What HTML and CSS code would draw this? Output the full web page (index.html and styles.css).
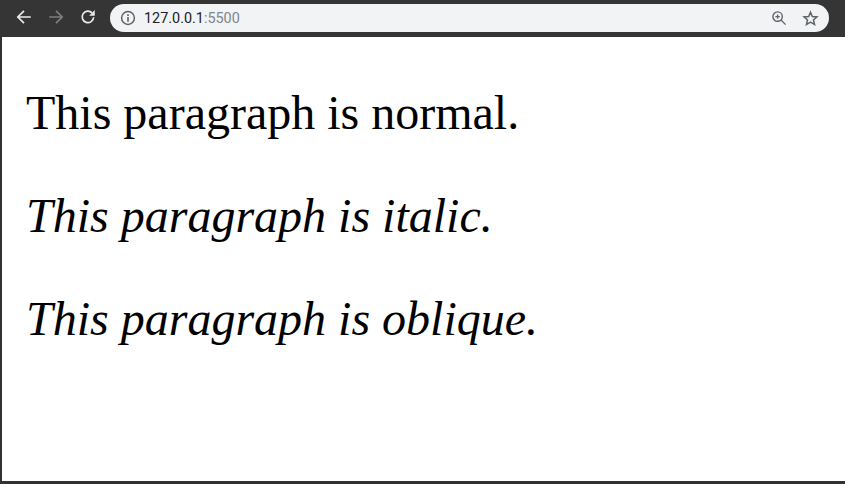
FILE: index.html
```html
<!DOCTYPE html>
<html lang="en">
<head>
    <meta charset="UTF-8">
    <meta name="viewport" content="width=device-width, initial-scale=1.0">
    <title>Font style</title>
    <link rel="stylesheet" href="styles.css">
</head>
<body>
    <div class="window">
        <div class="toolbar">
            <svg class="nav-icon" viewBox="0 0 16 16" aria-hidden="true"><path d="M14 8H3M8 2.5 2.5 8 8 13.5" fill="none" stroke="#e8eaed" stroke-width="1.5"/></svg>
            <svg class="nav-icon" viewBox="0 0 16 16" aria-hidden="true"><path d="M2 8h11M8 2.5 13.5 8 8 13.5" fill="none" stroke="#7c7e81" stroke-width="1.5"/></svg>
            <svg class="nav-icon" viewBox="0 0 16 16" aria-hidden="true"><path d="M13 8.2A5.1 5.1 0 1 1 11.6 4.4" fill="none" stroke="#e8eaed" stroke-width="1.5"/><path d="M14 1.8V6.8H9z" fill="#e8eaed"/></svg>
            <div class="address-bar">
                <svg class="info-icon" viewBox="0 0 14 14" aria-hidden="true"><circle cx="7" cy="7" r="5.6" fill="none" stroke="#5f6368" stroke-width="1.3"/><path d="M6.3 6.2h1.4v4H6.3zM6.3 3.8h1.4v1.4H6.3z" fill="#5f6368"/></svg>
                <span class="url">127.0.0.1<span class="url-port">:5500</span></span>
                <svg class="zoom-icon" viewBox="0 0 16 16" aria-hidden="true"><circle cx="6.6" cy="6.6" r="4.7" fill="none" stroke="#5f6368" stroke-width="1.4"/><path d="M10 10l4.6 4.6M4.4 6.6h4.4M6.6 4.4v4.4" fill="none" stroke="#5f6368" stroke-width="1.3"/></svg>
                <svg class="star-icon" viewBox="0 0 16 16" aria-hidden="true"><path d="M8 2.1l1.7 4 4.4.4-3.3 2.9 1 4.3L8 11.4l-3.8 2.3 1-4.3-3.3-2.9 4.4-.4z" fill="none" stroke="#5f6368" stroke-width="1.4"/></svg>
            </div>
        </div>
        <main class="page">
            <p>This paragraph is normal.</p>
            <p class="italic">This paragraph is italic.</p>
            <p class="oblique">This paragraph is oblique.</p>
        </main>
    </div>
</body>
</html>
```

FILE: styles.css
```css
html, body {
    height: 100%;
}
body {
    margin: 0;
    overflow: hidden;
    background-color: #fff;
}
.window {
    display: flex;
    flex-direction: column;
    height: 100%;
    box-sizing: border-box;
    border-bottom: 3px solid #323232;
}
.toolbar {
    display: flex;
    align-items: center;
    flex-shrink: 0;
    box-sizing: border-box;
    height: 37px;
    padding: 4px 16px 5px 15px;
    background-color: #353535;
}
.nav-icon {
    width: 18px;
    height: 18px;
    margin-right: 14px;
    margin-bottom: 2px;
}
.address-bar {
    display: flex;
    align-items: center;
    flex: 1;
    height: 28px;
    margin-left: -1px;
    padding: 0 10px 0 10px;
    border-radius: 14px;
    background-color: #f1f3f4;
}
.info-icon {
    width: 16px;
    height: 16px;
    margin-right: 8px;
}
.url {
    flex: 1;
    font-family: "Roboto", "Liberation Sans", sans-serif;
    font-size: 14.4px;
    color: #202124;
}
.url-port {
    color: #80868b;
}
.zoom-icon {
    width: 16px;
    height: 16px;
    margin-right: 15px;
}
.star-icon {
    width: 17px;
    height: 17px;
}
.page {
    flex: 1;
    padding: 0 24px;
    border-left: 2px solid #323232;
    font-family: "Liberation Serif", "Times New Roman", serif;
    font-size: 48px;
    color: #000;
}
.page p {
    margin: 48px 0;
}
.italic {
    font-style: italic;
}
.oblique {
    font-style: oblique;
}
```
